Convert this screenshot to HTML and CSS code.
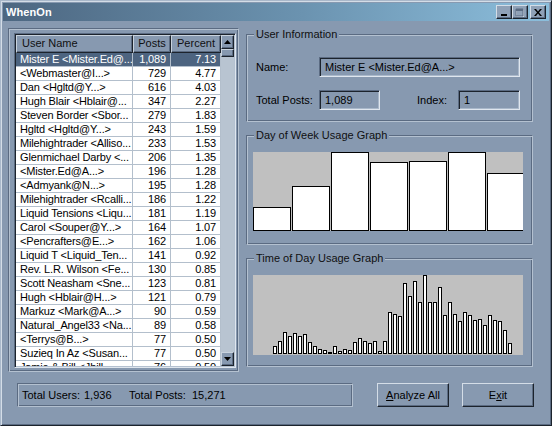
FILE: index.html
```html
<!DOCTYPE html>
<html>
<head>
<meta charset="utf-8">
<title>WhenOn</title>
<link rel="stylesheet" href="styles.css">
</head>
<body>
<div class="window">
  <div class="titlebar">
    <span class="title">WhenOn</span>
    <div class="caption-buttons">
      <span class="cbtn"><svg width="8" height="7" viewBox="0 0 8 7"><rect x="1" y="5" width="6" height="2" fill="#000"/></svg></span>
      <span class="cbtn"><svg width="10" height="9" viewBox="0 0 10 9"><path d="M1.5 1.5h7v7h-7z" fill="none" stroke="#d8e0ea"/><path d="M1 1h7v7h-7z M1 2h7" fill="none" stroke="#5b6b82"/><rect x="1" y="1" width="7" height="2" fill="#5b6b82"/></svg></span>
      <span class="cbtn close"><svg width="8" height="7" viewBox="0 0 8 7"><path d="M0 0h2l2 2.5 2-2.5h2l-3 3.5 3 3.5h-2l-2-2.5-2 2.5h-2l3-3.5z" fill="#000"/></svg></span>
    </div>
  </div>
  <div class="client">
    <div class="top">
      <div class="frame left-frame">
        <div class="listview">
          <div class="list-main">
            <div class="lv-header">
              <div class="hcell c-name">User Name</div>
              <div class="hcell c-posts">Posts</div>
              <div class="hcell c-pct">Percent</div>
            </div>
            <div class="lv-rows">
              <div class="row selected"><span class="c-name">Mister E &lt;Mister.Ed@...</span><span class="c-posts">1,089</span><span class="c-pct">7.13</span></div>
              <div class="row"><span class="c-name">&lt;Webmaster@I...&gt;</span><span class="c-posts">729</span><span class="c-pct">4.77</span></div>
              <div class="row"><span class="c-name">Dan &lt;Hgltd@Y...&gt;</span><span class="c-posts">616</span><span class="c-pct">4.03</span></div>
              <div class="row"><span class="c-name">Hugh Blair &lt;Hblair@...</span><span class="c-posts">347</span><span class="c-pct">2.27</span></div>
              <div class="row"><span class="c-name">Steven Border &lt;Sbor...</span><span class="c-posts">279</span><span class="c-pct">1.83</span></div>
              <div class="row"><span class="c-name">Hgltd &lt;Hgltd@Y...&gt;</span><span class="c-posts">243</span><span class="c-pct">1.59</span></div>
              <div class="row"><span class="c-name">Milehightrader &lt;Alliso...</span><span class="c-posts">233</span><span class="c-pct">1.53</span></div>
              <div class="row"><span class="c-name">Glenmichael Darby &lt;...</span><span class="c-posts">206</span><span class="c-pct">1.35</span></div>
              <div class="row"><span class="c-name">&lt;Mister.Ed@A...&gt;</span><span class="c-posts">196</span><span class="c-pct">1.28</span></div>
              <div class="row"><span class="c-name">&lt;Admyank@N...&gt;</span><span class="c-posts">195</span><span class="c-pct">1.28</span></div>
              <div class="row"><span class="c-name">Milehightrader &lt;Rcalli...</span><span class="c-posts">186</span><span class="c-pct">1.22</span></div>
              <div class="row"><span class="c-name">Liquid Tensions &lt;Liqu...</span><span class="c-posts">181</span><span class="c-pct">1.19</span></div>
              <div class="row"><span class="c-name">Carol &lt;Souper@Y...&gt;</span><span class="c-posts">164</span><span class="c-pct">1.07</span></div>
              <div class="row"><span class="c-name">&lt;Pencrafters@E...&gt;</span><span class="c-posts">162</span><span class="c-pct">1.06</span></div>
              <div class="row"><span class="c-name">Liquid T &lt;Liquid_Ten...</span><span class="c-posts">141</span><span class="c-pct">0.92</span></div>
              <div class="row"><span class="c-name">Rev. L.R. Wilson &lt;Fe...</span><span class="c-posts">130</span><span class="c-pct">0.85</span></div>
              <div class="row"><span class="c-name">Scott Neasham &lt;Sne...</span><span class="c-posts">123</span><span class="c-pct">0.81</span></div>
              <div class="row"><span class="c-name">Hugh &lt;Hblair@H...&gt;</span><span class="c-posts">121</span><span class="c-pct">0.79</span></div>
              <div class="row"><span class="c-name">Markuz &lt;Mark@A...&gt;</span><span class="c-posts">90</span><span class="c-pct">0.59</span></div>
              <div class="row"><span class="c-name">Natural_Angel33 &lt;Na...</span><span class="c-posts">89</span><span class="c-pct">0.58</span></div>
              <div class="row"><span class="c-name">&lt;Terrys@B...&gt;</span><span class="c-posts">77</span><span class="c-pct">0.50</span></div>
              <div class="row"><span class="c-name">Suzieq In Az &lt;Susan...</span><span class="c-posts">77</span><span class="c-pct">0.50</span></div>
              <div class="row"><span class="c-name">Jamie &amp; Bill &lt;Jbill...</span><span class="c-posts">76</span><span class="c-pct">0.50</span></div>
            </div>
          </div>
          <div class="vscroll">
            <div class="sbtn"><svg width="7" height="4" viewBox="0 0 7 4"><path d="M3.5 0L7 4H0z" fill="#000"/></svg></div>
            <div class="thumb"></div>
            <div class="track"></div>
            <div class="sbtn"><svg width="7" height="4" viewBox="0 0 7 4"><path d="M0 0h7L3.5 4z" fill="#000"/></svg></div>
          </div>
        </div>
      </div>
      <div class="right">
        <fieldset class="group">
          <legend>User Information</legend>
          <div class="info-grid">
            <span class="lbl">Name:</span>
            <div class="field span4">Mister E &lt;Mister.Ed@A...&gt;</div>
            <span class="lbl">Total Posts:</span>
            <div class="field">1,089</div>
            <span></span>
            <span class="lbl">Index:</span>
            <div class="field">1</div>
          </div>
        </fieldset>
        <fieldset class="group">
          <legend>Day of Week Usage Graph</legend>
          <div class="graph-wrap dow-wrap">
            <div class="chart dow">
              <div class="dbar" style="height:24px"></div>
              <div class="dbar" style="height:45px"></div>
              <div class="dbar" style="height:79px"></div>
              <div class="dbar" style="height:69px"></div>
              <div class="dbar" style="height:70px"></div>
              <div class="dbar" style="height:79px"></div>
              <div class="dbar" style="height:58px"></div>
            </div>
          </div>
        </fieldset>
        <fieldset class="group">
          <legend>Time of Day Usage Graph</legend>
          <div class="graph-wrap tod-wrap">
            <div class="chart tod" id="tod"></div>
          </div>
        </fieldset>
      </div>
    </div>
    <div class="bottom">
      <div class="status">
        <span class="s1">Total Users:</span><span class="s2">1,936</span><span class="s3">Total Posts:</span><span>15,271</span>
      </div>
      <button class="btn analyze"><u>A</u>nalyze All</button>
      <button class="btn exit">E<u>x</u>it</button>
    </div>
  </div>
</div>
<script src="app.js"></script>
</body>
</html>
```

FILE: styles.css
```css
* { box-sizing: border-box; }
html, body { margin: 0; padding: 0; }
body {
  width: 552px; height: 426px; overflow: hidden;
  font-family: "Liberation Sans", Arial, sans-serif;
  font-size: 11px; color: #000;
  background: #8799b0;
}
.window {
  width: 552px; height: 426px;
  background: #8799b0;
  border: 1px solid;
  border-color: #a9b8ca #1c232c #1c232c #a9b8ca;
  box-shadow: inset 1px 1px 0 #d4dde7, inset -1px -1px 0 #5b6b82;
  padding: 2px;
  display: flex; flex-direction: column;
}
.titlebar {
  height: 18px; flex: none;
  background: linear-gradient(90deg, #4d6781 0%, #6b93b0 55%, #8cbedc 100%);
  display: flex; align-items: center;
  padding: 0 3px 0 3px;
}
.title { color: #fff; font-weight: bold; font-size: 11px; flex: 1; letter-spacing: 0.1px; }
.caption-buttons { display: flex; }
.cbtn {
  width: 16px; height: 14px;
  background: #8fa1b7;
  border: 1px solid;
  border-color: #d4dde7 #1c232c #1c232c #d4dde7;
  box-shadow: inset -1px -1px 0 #5b6b82;
  display: flex; align-items: center; justify-content: center;
}
.cbtn.close { margin-left: 2px; }

.client {
  flex: 1;
  display: flex; flex-direction: column;
  padding: 7px 10px 0 5px;
}
.top { display: flex; gap: 2px; height: 344px; }

.frame {
  border: 1px solid;
  border-color: #5b6b82 #b4c1d0 #b4c1d0 #5b6b82;
  box-shadow: inset 1px 1px 0 #b4c1d0, inset -1px -1px 0 #5b6b82;
}
.left-frame { width: 231px; padding: 4px 2px 3px 5px; display: flex; }

.listview {
  flex: 1;
  display: flex;
  border: 1px solid;
  border-color: #5b6b82 #dfe6ee #dfe6ee #5b6b82;
  box-shadow: inset 1px 1px 0 #1c232c, inset -1px -1px 0 #b4c1d0;
  padding: 1px;
  background: #fff;
}
.list-main { width: 205px; overflow: hidden; display: flex; flex-direction: column; }
.lv-header { display: flex; height: 18px; flex: none; background: #8799b0; }
.hcell {
  border: 1px solid;
  border-color: #c9d3de #1c232c #1c232c #c9d3de;
  box-shadow: inset -1px -1px 0 #5b6b82;
  text-align: center; line-height: 15px;
  color: #101010;
}
.hcell.c-name { text-align: left; padding-left: 5px; }
.c-name { width: 117px; flex: none; }
.c-posts { width: 38px; flex: none; }
.c-pct { width: 50px; flex: none; }
.lv-rows { flex: 1; overflow: hidden; }
.row {
  display: flex; height: 14px;
  border-bottom: 1px solid #b3bfcc;
  line-height: 13px;
  letter-spacing: -0.15px;
}
.row span { border-right: 1px solid #b3bfcc; white-space: nowrap; overflow: hidden; }
.row .c-name { padding-left: 4px; }
.row .c-posts { text-align: right; padding-right: 4px; }
.row .c-pct { text-align: right; padding-right: 4px; }
.row.selected { background: #4d6480; color: #fff; }

.vscroll { width: 13px; flex: none; display: flex; flex-direction: column; background: #b8c4d1; }
.sbtn, .thumb {
  background: #8799b0;
  border: 1px solid;
  border-color: #c9d3de #1c232c #1c232c #c9d3de;
  box-shadow: inset -1px -1px 0 #5b6b82;
}
.sbtn { height: 14px; display: flex; align-items: center; justify-content: center; flex: none; }
.thumb { height: 8px; flex: none; }
.track { flex: 1; }

.right { width: 298px; padding: 0 6px 0 5px; display: flex; flex-direction: column; gap: 7px; }
.group {
  margin: 0; padding: 0; min-width: 0;
  border: 1px solid;
  border-color: #5b6b82 #b4c1d0 #b4c1d0 #5b6b82;
  box-shadow: inset 1px 1px 0 #b4c1d0, inset -1px -1px 0 #5b6b82;
}
.group legend {
  margin-left: 7px; padding: 0 2px;
  height: 13px; line-height: 13px;
  background: #8799b0;
  color: #101010;
}
.info-grid {
  padding: 16px 12px 11px 9px;
  display: grid;
  grid-template-columns: 63px 61px 37px 41px 62px;
  grid-template-rows: 20px 20px;
  row-gap: 13px;
  align-items: center;
}
.span4 { grid-column: 2 / 6; }
.field {
  height: 20px;
  border: 1px solid;
  border-color: #5b6b82 #dfe6ee #dfe6ee #5b6b82;
  box-shadow: inset 1px 1px 0 #1c232c, inset -1px -1px 0 #a9b8ca;
  padding-left: 5px;
  line-height: 18px;
  white-space: nowrap; overflow: hidden;
}
.graph-wrap { padding: 10px 9px 13px 6px; }
.tod-wrap { padding: 10px 9px 11px 6px; }
.chart { background: #c0c0c0; display: flex; align-items: flex-end; overflow: hidden; width: 270px; }
.dow { height: 79px; gap: 1px; }
.dbar { flex: 0 0 38px; border: 1px solid #000; background: #fff; }
.tod { height: 80px; gap: 1px; padding: 0 0 1px 20px; }
.tbar { flex: 0 0 4px; border: 1px solid #000; background: #fff; }

.bottom { display: flex; margin-top: 11px; padding-left: 9px; align-items: flex-start; }
.status {
  width: 336px; height: 24px;
  border: 1px solid;
  border-color: #5b6b82 #b4c1d0 #b4c1d0 #5b6b82;
  box-shadow: inset 1px 1px 0 #b4c1d0, inset -1px -1px 0 #5b6b82;
  display: flex; align-items: center;
  padding-left: 4px;
  white-space: nowrap;
}
.s1 { width: 62px; }
.s2 { width: 45px; }
.s3 { width: 63px; }
.btn {
  width: 72px; height: 24px;
  font: inherit; color: #000;
  background: #8799b0;
  border: 1px solid;
  border-color: #d4dde7 #1c232c #1c232c #d4dde7;
  box-shadow: inset -1px -1px 0 #5b6b82;
  padding: 0;
}
.analyze { margin-left: 24px; }
.exit { margin-left: 13px; }
```

FILE: app.js
```js
var heights = [8,13,22,18,21,18,20,12,8,5,4,2,8,3,5,4,12,16,13,11,13,3,13,42,40,38,71,58,73,52,79,52,52,67,39,52,40,33,42,39,34,35,29,39,34,33,24,11];
var tod = document.getElementById('tod');
heights.forEach(function (h) {
  var b = document.createElement('div');
  b.className = 'tbar';
  b.style.height = h + 'px';
  tod.appendChild(b);
});
```
